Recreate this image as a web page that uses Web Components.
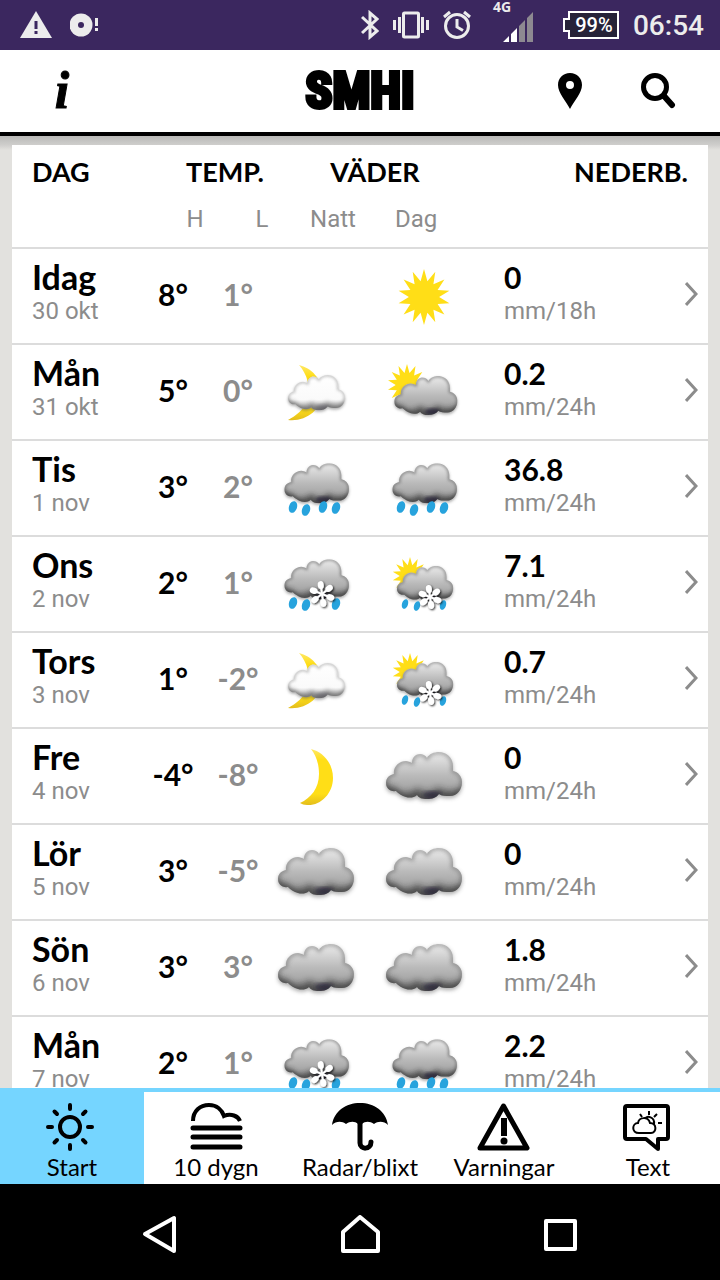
<!DOCTYPE html>
<html lang="sv">
<head>
<meta charset="utf-8">
<meta name="viewport" content="width=device-width, initial-scale=1">
<title>SMHI Väder</title>
<style>
    body {
        margin: 0;
        height: 100vh;
        display: flex;
        flex-direction: column;
        background: #e2e1de;
        color: #000;
        font-family: Lato, "Liberation Sans", sans-serif;
    }
    forecast-table {
        flex: 1;
        min-height: 0;
    }
</style>
</head>
<body>
<status-bar time="06:54" battery="99%"></status-bar>
<app-header>SMHI</app-header>
<forecast-table></forecast-table>
<tab-bar>
    <tab-item icon="sun" active>Start</tab-item>
    <tab-item icon="fog">10 dygn</tab-item>
    <tab-item icon="umbrella">Radar/blixt</tab-item>
    <tab-item icon="warning">Varningar</tab-item>
    <tab-item icon="text">Text</tab-item>
</tab-bar>
<system-nav></system-nav>

<script>
class StatusBar extends HTMLElement {
    constructor() {
        super();
        this.attachShadow({ mode: 'open' });
    }

    connectedCallback() {
        this.shadowRoot.innerHTML = `
            <style>
                :host {
                    display: flex;
                    justify-content: space-between;
                    align-items: center;
                    height: 50px;
                    padding: 0 16px 0 20px;
                    background: #3b275f;
                    color: #ececec;
                    font-family: Roboto, sans-serif;
                }
                svg { display: block; }
                .group { display: flex; align-items: center; }
                .left { gap: 18px; }
                .right { gap: 14px; }
                .signal {
                    display: flex;
                    flex-direction: column;
                    margin: 0 4px 0 8px;
                    width: 40px;
                    font: bold 14px/14px "Open Sans", sans-serif;
                    padding-bottom: 8px;
                }
                .signal svg { align-self: flex-end; margin-top: -2px; }
                .battery {
                    display: flex;
                    align-items: center;
                    margin-left: 12px;
                }
                .level {
                    border: 2px solid #fff;
                    border-left: 0;
                    background: #262238;
                    width: 46px;
                    text-align: center;
                    font-size: 20px;
                    font-weight: 500;
                    line-height: 24px;
                    color: #fff;
                }
                .time { font-size: 28px; font-weight: 500; line-height: 50px; padding-top: 2px; }
            </style>
            <div class="group left">
                <svg width="32" height="28" viewBox="0 0 32 28"><path d="M16 0L32 27H0Z" fill="#ececec"/><path d="M16 10v8M16 20v3" stroke="#3b275f" stroke-width="3"/></svg>
                <svg width="30" height="26" viewBox="0 0 30 26"><circle cx="11" cy="13" r="11.500" fill="#ececec"/><circle cx="11" cy="13" r="3" fill="#3b275f"/><path d="M26.500 6v8M26.500 16v3" stroke="#ececec" stroke-width="3"/></svg>
            </div>
            <div class="group right">
                <svg width="18" height="30" viewBox="0 0 18 30" fill="none" stroke="#ececec" stroke-width="3"><path d="M1 7L16 21L9 27V3L16 9L1 23"/></svg>
                <svg width="36" height="30" viewBox="0 0 36 30" fill="none" stroke="#ececec" stroke-width="3"><rect x="10.500" y="3" width="15" height="24" rx="1"/><path d="M6.500 7v16M1.500 10v10M29.500 7v16M34.500 10v10"/></svg>
                <svg width="28" height="30" viewBox="0 0 28 30" fill="none" stroke="#ececec" stroke-width="3"><circle cx="14" cy="16" r="11.500"/><path d="M14 9v8l6 3.500M1 7l6-5M27 7l-6-5"/></svg>
                <div class="signal">4G
                    <svg width="32" height="30" viewBox="0 0 32 30"><path d="M2 30L8 24V30ZM10 30V22L16 16V30Z" fill="#fff"/><path d="M18 30V14L24 8V30ZM26 30V6L32 0V30Z" fill="#8d8991"/></svg>
                </div>
                <div class="battery">
                    <svg width="8" height="28" viewBox="0 0 8 28"><path d="M8 1H6V8H1V20H6V27H8" fill="#262238" stroke="#fff" stroke-width="2"/></svg>
                    <div class="level">${this.getAttribute('battery')}</div>
                </div>
                <div class="time">${this.getAttribute('time')}</div>
            </div>
        `;
    }
}

class AppHeader extends HTMLElement {
    constructor() {
        super();
        this.attachShadow({ mode: 'open' });
        this.shadowRoot.innerHTML = `
            <style>
                :host {
                    display: grid;
                    grid-template-columns: 1fr auto 1fr;
                    align-items: center;
                    height: 82px;
                    background: #fff;
                    border-bottom: 4px solid #000;
                }
                h1 {
                    margin: 0;
                    font: bold 50px/82px "Liberation Sans Narrow", "Roboto Condensed", "Open Sans Condensed", sans-serif;
                    -webkit-text-stroke: 4px #000;
                }
                button {
                    width: 88px;
                    height: 82px;
                    padding: 0;
                    border: 0;
                    background: none;
                    color: #000;
                }
                .info {
                    justify-self: start;
                    margin-left: 18px;
                    font: italic bold 52px/82px "Liberation Serif", serif;
                    -webkit-text-stroke: 1px #000;
                }
                .actions { justify-self: end; display: flex; margin-right: 18px; }
                svg { display: block; margin: auto; }
            </style>
            <button class="info" aria-label="Information">i</button>
            <h1><slot></slot></h1>
            <div class="actions">
                <button aria-label="Plats">
                    <svg width="24" height="36" viewBox="0 0 24 36"><path fill-rule="evenodd" d="M12 0C5 0 0 5 0 12C0 20 8 28 12 36C16 28 24 20 24 12C24 5 19 0 12 0ZM12 8a4 4 0 1 1 0 8a4 4 0 1 1 0-8Z"/></svg>
                </button>
                <button aria-label="Sök">
                    <svg width="36" height="36" viewBox="0 0 36 36" fill="none" stroke="#000"><circle cx="15" cy="14" r="11.500" stroke-width="5"/><path d="M24 23L32 32" stroke-width="6" stroke-linecap="round"/></svg>
                </button>
            </div>
        `;
    }
}

const CLOUD = 'M12 34C11 27 17 21 24 21C26 21 28 22 30 23C30 17 34 14 38 14C41 14 43 15 45 18C47 14 52 12 57 12C65 12 71 18 71 26V31C76 32 80 36 80 42C80 50 75 56 68 56C63 56 60 56 57 54C54 58 50 59 45 59C40 59 37 58 35 55C32 58 27 58 24 57C20 56 16 53 14 51C8 52 4 48 4 43C4 38 7 35 12 34Z';

// 14-pointed star
function sun(cx, cy, r) {
    const points = [];
    for (let i = 0; i < 28; i++) {
        const a = i * Math.PI / 14;
        const d = i % 2 ? r * 0.58 : r;
        points.push((cx + d * Math.sin(a) * 0.93).toFixed(1) + ',' + (cy - d * Math.cos(a)).toFixed(1));
    }
    return `<polygon points="${points.join(' ')}" fill="#ffde17"/>`;
}

function cloud(x, y, scale, light) {
    return `
        <g transform="translate(${x} ${y}) scale(${scale})">
            <path d="${CLOUD}" fill="#555" opacity=".5" transform="translate(0 2)" filter="url(#soft)"/>
            <path d="${CLOUD}" fill="url(#${light ? 'light' : 'grey'})"/>
            <g clip-path="url(#shape)">
                <path d="${CLOUD}" fill="none" stroke="${light ? '#999' : '#666'}" stroke-width="3" opacity=".7" filter="url(#soft)"/>
                <path d="M0 40C4 48 12 44 16 50C22 55 30 52 36 48C42 54 50 52 56 47C64 53 74 51 82 46V64H0Z" fill="#222" opacity="${light ? '.35' : '.55'}" filter="url(#softer)"/>
                <ellipse cx="50" cy="55" rx="9" ry="4" fill="#1b1830" opacity="${light ? '.2' : '.6'}" filter="url(#soft)"/>
            </g>
        </g>`;
}

function drops(list, ry) {
    return list.map(([x, y]) => `
        <ellipse cx="${x}" cy="${y}" rx="${ry - 2}" ry="${ry}" fill="#27a3dd" transform="rotate(18 ${x} ${y})"/>`).join('');
}

function flake(cx, cy, r) {
    let arms = '';
    for (let i = 0; i < 6; i++) {
        arms += `<g transform="rotate(${i * 60 - 8})"><path d="M0 0V-${r - 4}" stroke="#fff" stroke-width="2"/><ellipse cy="-${r - 4}" rx="3" ry="4" fill="#fff"/></g>`;
    }
    return `<g transform="translate(${cx} ${cy})" filter="url(#edge)">${arms}</g>`;
}

const WEATHER = {
    'sun': ['Sol', () => sun(42, 37, 28)],
    'moon': ['Klart', () => '<path d="M37 9C49 12 59 23 59 38C59 54 46 66 33 65C30 65 28 64 26 63C37 58 45 48 45 34C45 24 42 15 37 9Z" fill="url(#moon)"/>'],
    'moon-cloud': ['Halvklart', () => '<path d="M25 9C37 12 48 22 48 38C47 54 32 66 14 64C22 60 30 53 34 44C37 31 33 18 25 9Z" fill="url(#moon)"/>' + cloud(11, 10, 0.75, true)],
    'sun-cloud': ['Halvklart', () => sun(25, 29, 21) + cloud(9, 10, 0.83)],
    'cloud': ['Mulet', () => cloud(0, 0, 1)],
    'rain': ['Regn', () => cloud(7, 1, 0.85) + drops([[19, 55], [32, 58], [49, 55], [62, 56]], 6)],
    'sleet': ['Snöblandat regn', () => cloud(7, 1, 0.85) + drops([[19, 55], [32, 57], [62, 56]], 6) + flake(48, 46, 13)],
    'sun-sleet': ['Byar av snöblandat regn', () => sun(28, 28, 19) + cloud(12, 9, 0.74) + drops([[23, 56], [35, 58], [61, 57]], 5) + flake(48, 49, 12)]
};

class WeatherIcon extends HTMLElement {
    constructor() {
        super();
        this.attachShadow({ mode: 'open' });
    }

    connectedCallback() {
        const [label, draw] = WEATHER[this.getAttribute('type')];
        this.shadowRoot.innerHTML = `
            <style>
                :host { display: inline-block; vertical-align: middle; }
                svg { display: block; }
            </style>
            <svg width="84" height="72" viewBox="0 0 84 72" role="img" aria-label="${label}">
                <defs>
                    <linearGradient id="grey" x1="0" y1="0" x2="0" y2="1">
                        <stop offset="0" stop-color="#ececec"/>
                        <stop offset=".5" stop-color="#bababa"/>
                        <stop offset="1" stop-color="#949494"/>
                    </linearGradient>
                    <linearGradient id="light" x1="0" y1="0" x2="0" y2="1">
                        <stop offset="0" stop-color="#fff"/>
                        <stop offset=".7" stop-color="#fafafa"/>
                        <stop offset="1" stop-color="#aaa"/>
                    </linearGradient>
                    <linearGradient id="moon" x1="0" y1="0" x2="0" y2="1">
                        <stop offset="0" stop-color="#ffe868"/>
                        <stop offset=".2" stop-color="#ffde17"/>
                        <stop offset=".8" stop-color="#ffde17"/>
                        <stop offset="1" stop-color="#e3bd1c"/>
                    </linearGradient>
                    <filter id="soft"><feGaussianBlur stdDeviation="2"/></filter>
                    <filter id="softer" y="-40%" height="180%"><feGaussianBlur stdDeviation="3"/></filter>
                    <filter id="edge" x="-30%" y="-30%" width="170%" height="170%"><feDropShadow dx="1" dy="1" stdDeviation="1" flood-color="#000" flood-opacity=".9"/></filter>
                    <clipPath id="shape"><path d="${CLOUD}"/></clipPath>
                </defs>
                ${draw()}
            </svg>
        `;
    }
}

// day, date, high, low, night, day symbol, amount, hours
const FORECAST = [
    ['Idag', '30 okt', 8, 1, '', 'sun', '0', 18],
    ['Mån', '31 okt', 5, 0, 'moon-cloud', 'sun-cloud', '0.2', 24],
    ['Tis', '1 nov', 3, 2, 'rain', 'rain', '36.8', 24],
    ['Ons', '2 nov', 2, 1, 'sleet', 'sun-sleet', '7.1', 24],
    ['Tors', '3 nov', 1, -2, 'moon-cloud', 'sun-sleet', '0.7', 24],
    ['Fre', '4 nov', -4, -8, 'moon', 'cloud', '0', 24],
    ['Lör', '5 nov', 3, -5, 'cloud', 'cloud', '0', 24],
    ['Sön', '6 nov', 3, 3, 'cloud', 'cloud', '1.8', 24],
    ['Mån', '7 nov', 2, 1, 'sleet', 'rain', '2.2', 24]
];

class ForecastTable extends HTMLElement {
    constructor() {
        super();
        this.attachShadow({ mode: 'open' });
    }

    connectedCallback() {
        this.shadowRoot.innerHTML = `
            <style>
                :host {
                    display: block;
                    overflow-y: auto;
                    scrollbar-width: none;
                    padding: 9px 12px 0;
                    background: linear-gradient(#b9b9b7, #cfcecc 9px, #e2e1de 14px);
                }
                table {
                    width: 100%;
                    table-layout: fixed;
                    border-collapse: separate;
                    border-spacing: 0;
                    background: #fff;
                }
                th, td { padding: 0; text-align: center; }
                .titles th {
                    height: 54px;
                    font-size: 27px;
                    line-height: 54px;
                    font-weight: 700;
                }
                .units th {
                    height: 48px;
                    vertical-align: top;
                    font: 24px/40px Roboto, sans-serif;
                    color: #8c8c8c;
                    border-bottom: 2px solid #dcdcdc;
                }
                .titles .temp { padding-left: 40px; }
                .titles .weather { padding-right: 6px; }
                .titles .precip { text-align: right; padding-right: 20px; }
                .units .high { padding-left: 44px; }
                .units .low { padding-left: 48px; }
                .units .night { padding-left: 34px; }
                .units .noon { padding-right: 16px; }
                tbody th, tbody td {
                    height: 94px;
                    border-bottom: 2px solid #dcdcdc;
                    font-size: 30px;
                    font-weight: 700;
                }
                .titles .day, tbody .day { text-align: left; padding-left: 20px; }
                tbody .day, tbody .precip {
                    text-align: left;
                    vertical-align: top;
                    line-height: 36px;
                }
                tbody .day { font-size: 34px; }
                tbody .precip { padding-left: 18px; }
                .degrees {
                    height: 90px;
                    padding-bottom: 4px;
                }
                .name { padding-top: 10px; }
                .sub {
                    font: 24px/32px Roboto, sans-serif;
                    color: #8c8c8c;
                    white-space: nowrap;
                }
                .low { color: #8c8c8c; }
                button {
                    display: block;
                    width: 100%;
                    height: 92px;
                    padding: 0 10px 4px 0;
                    border: 0;
                    background: none;
                }
                button svg { display: block; margin-left: auto; }
            </style>
            <table>
                <colgroup>
                    <col style="width: 128px"><col style="width: 66px"><col style="width: 64px">
                    <col style="width: 92px"><col style="width: 124px"><col><col style="width: 60px">
                </colgroup>
                <thead>
                    <tr class="titles">
                        <th class="day">DAG</th>
                        <th class="temp" colspan="2">TEMP.</th>
                        <th class="weather" colspan="2">VÄDER</th>
                        <th class="precip" colspan="2">NEDERB.</th>
                    </tr>
                    <tr class="units">
                        <th></th>
                        <th class="high">H</th>
                        <th class="low">L</th>
                        <th class="night">Natt</th>
                        <th class="noon">Dag</th>
                        <th colspan="2"></th>
                    </tr>
                </thead>
                <tbody>${FORECAST.map(row => this.renderRow(row)).join('')}</tbody>
            </table>
        `;
    }

    renderRow([day, date, high, low, night, noon, amount, hours]) {
        const icon = type => type ? `<weather-icon type="${type}"></weather-icon>` : '';
        return `
            <tr>
                <th class="day" scope="row"><div class="name">${day}</div><div class="sub">${date}</div></th>
                <td><div class="degrees" style="line-height: 90px">${high}°</div></td>
                <td class="low"><div class="degrees" style="line-height: 90px">${low}°</div></td>
                <td>${icon(night)}</td>
                <td>${icon(noon)}</td>
                <td class="precip"><div class="name">${amount}</div><div class="sub">mm/${hours}h</div></td>
                <td><button aria-label="Visa ${date}"><svg width="13" height="24" viewBox="0 0 13 24" fill="none" stroke="#8c8c8c" stroke-width="3"><path d="M1 1L11 12L1 23"/></svg></button></td>
            </tr>`;
    }
}

class TabBar extends HTMLElement {
    constructor() {
        super();
        this.attachShadow({ mode: 'open' });
        this.shadowRoot.innerHTML = `
            <style>
                :host { display: block; background: #fff; border-top: 4px solid #75d5ff; }
                nav { display: flex; }
                ::slotted(*) { flex: 1 1 0; }
            </style>
            <nav><slot></slot></nav>
        `;
    }
}

const TAB_ICONS = {
    sun: `<g transform="translate(28 27)" fill="none" stroke="#000" stroke-width="4" stroke-linecap="round">
        <circle r="10"/>
        <path d="M0-22v4M0 18v4M-22 0h4M18 0h4M-15.500-15.500l2.500 2.500M13 13l2.500 2.500M-15.500 15.500l2.500-2.500M13-13l2.500-2.500"/></g>`,
    fog: `<g fill="none" stroke="#000" stroke-width="4"><path d="M7 21C7 11 14 5 23 5C31 5 36 10 38 16C45 13 52 16 54 21"/>
        <path d="M7 28H54M7 37H54M7 47H54" stroke-width="5" stroke-linecap="round"/></g>`,
    umbrella: `<path d="M2 25C4 11 16 3 30 3C44 3 56 11 58 25C54 21 48 21 44 24C40 21 35 21 32 24H28C25 21 20 21 16 24C12 21 6 21 2 25Z"/>
        <path d="M30 20V43C30 50 41 50 41 42" fill="none" stroke="#000" stroke-width="5" stroke-linecap="round"/>`,
    warning: `<path d="M29.500 6L53 48H6Z" fill="none" stroke="#000" stroke-width="5" stroke-linejoin="round"/>
        <path d="M27 18H33V36H27Z"/><circle cx="30" cy="41" r="3.500"/>`,
    text: `<path d="M9 6H48Q50 6 50 8V37Q50 39 48 39H40V49L28 39H9Q7 39 7 37V8Q7 6 9 6Z" fill="none" stroke="#000" stroke-width="4" stroke-linejoin="round"/>
        <path d="M21 33C13 33 14 23 20 23C21 17 30 16 32 23C39 23 39 33 33 33ZM27 19C29 15 37 17 36 24M31 11v4M22 14l2 3M39 14l-3 3M40 23h4" fill="none" stroke="#000" stroke-width="2"/>`
};

class TabItem extends HTMLElement {
    constructor() {
        super();
        this.attachShadow({ mode: 'open' });
    }

    connectedCallback() {
        this.shadowRoot.innerHTML = `
            <style>
                :host { display: block; }
                :host([active]) { background: #75d5ff; }
                a {
                    display: flex;
                    flex-direction: column;
                    align-items: center;
                    padding: 8px 0 2px;
                    color: #000;
                    text-decoration: none;
                    font-size: 24px;
                    line-height: 30px;
                    white-space: nowrap;
                }
            </style>
            <a href="#"><svg width="60" height="52" viewBox="0 0 60 52" aria-hidden="true">${TAB_ICONS[this.getAttribute('icon')]}</svg><slot></slot></a>
        `;
    }
}

class SystemNav extends HTMLElement {
    constructor() {
        super();
        this.attachShadow({ mode: 'open' });
        this.shadowRoot.innerHTML = `
            <style>
                :host { display: flex; padding: 0 60px; background: #000; }
                button {
                    flex: 1;
                    height: 96px;
                    padding: 6px 0 0;
                    border: 0;
                    background: none;
                }
                svg { display: block; margin: auto; fill: none; stroke: #fff; stroke-width: 4; stroke-linejoin: round; }
            </style>
            <button aria-label="Tillbaka"><svg width="40" height="40" viewBox="0 0 40 40"><path d="M34 3V36L5 19Z"/></svg></button>
            <button aria-label="Hem"><svg width="40" height="40" viewBox="0 0 40 40"><path d="M3 36V17L20 2L38 17V36Z"/></svg></button>
            <button aria-label="Översikt"><svg width="40" height="40" viewBox="0 0 40 40"><path d="M6 6H35V34H6Z"/></svg></button>
        `;
    }
}

customElements.define('status-bar', StatusBar);
customElements.define('app-header', AppHeader);
customElements.define('weather-icon', WeatherIcon);
customElements.define('forecast-table', ForecastTable);
customElements.define('tab-bar', TabBar);
customElements.define('tab-item', TabItem);
customElements.define('system-nav', SystemNav);
</script>
</body>
</html>
